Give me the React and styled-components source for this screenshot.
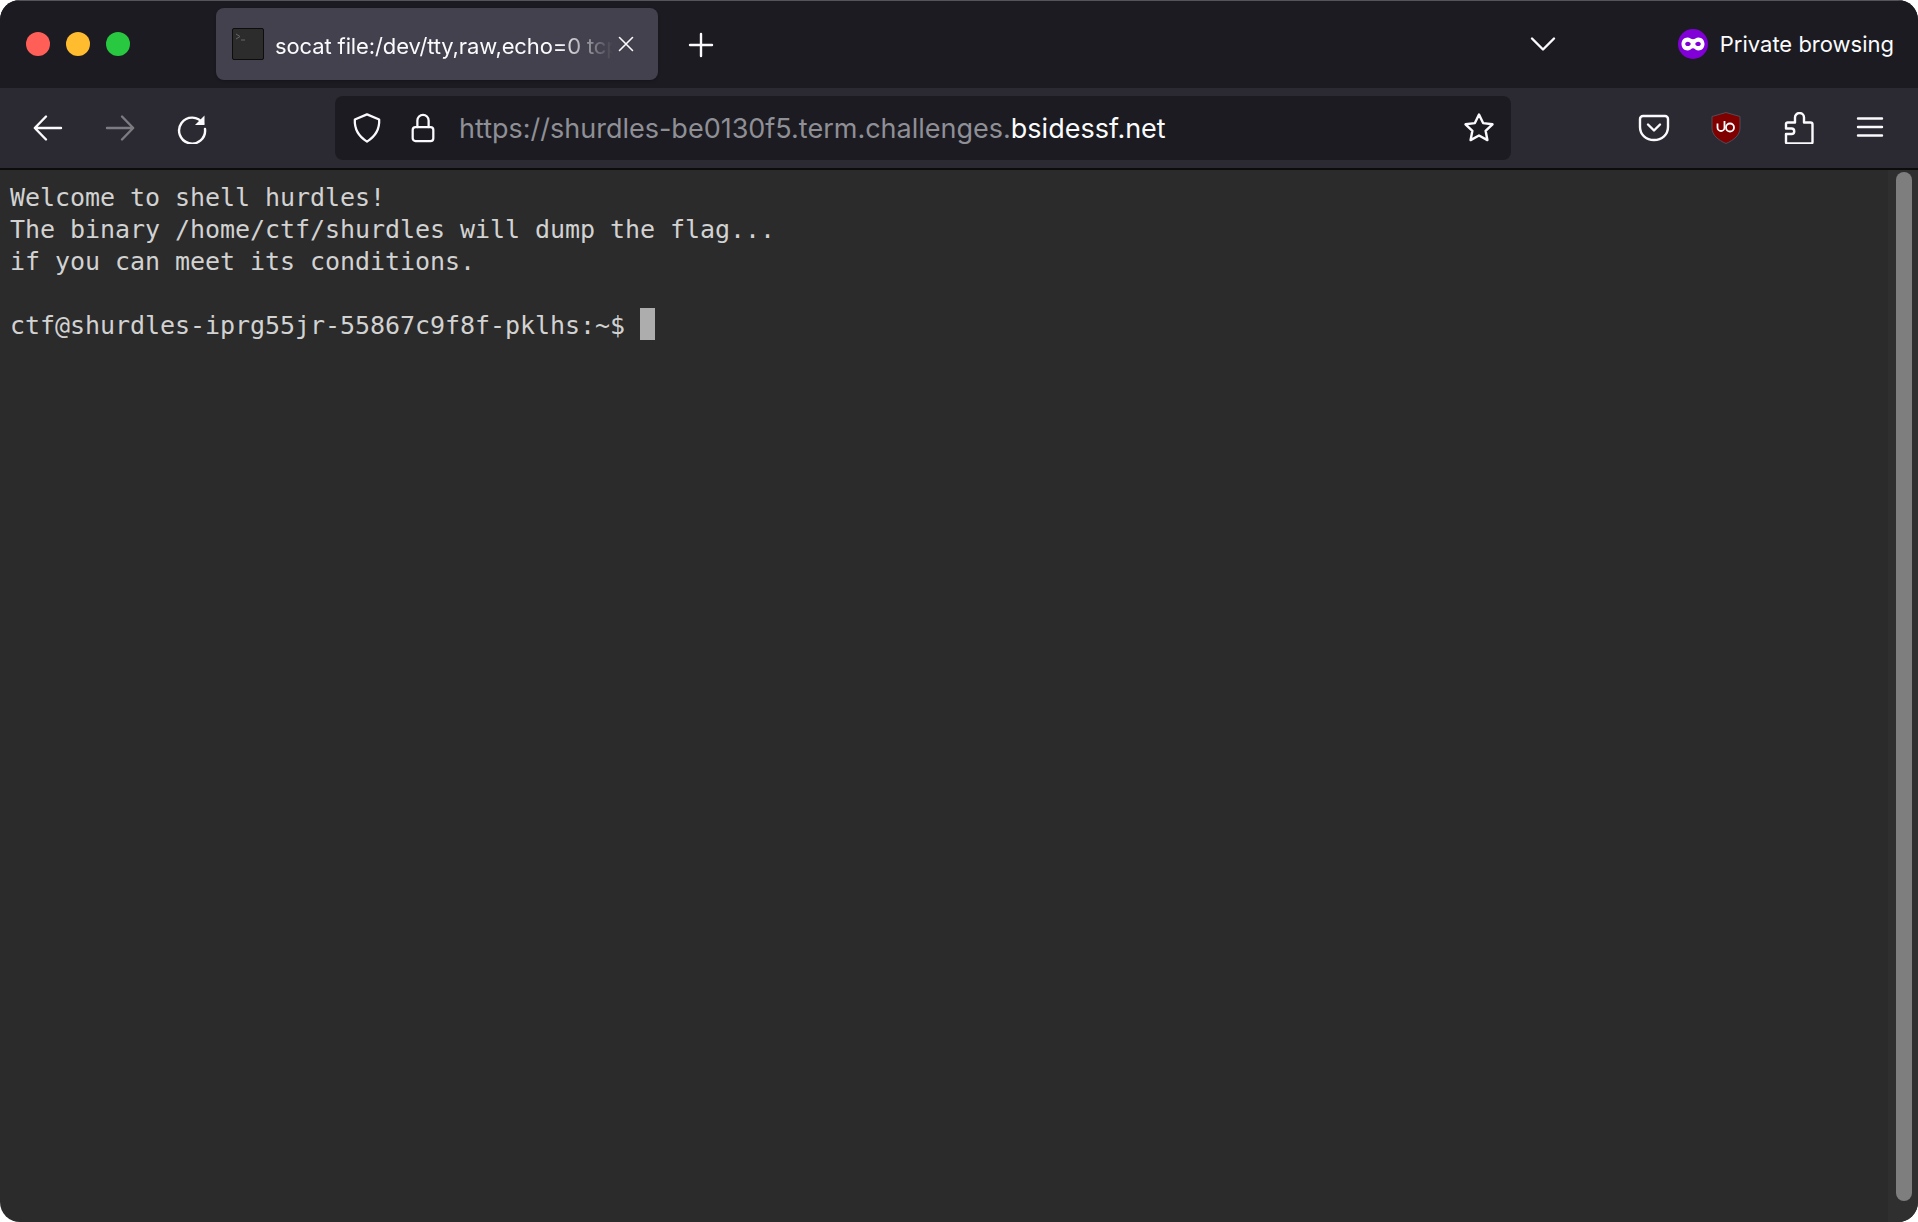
import React from 'react';
import styled, { createGlobalStyle } from 'styled-components';

const GlobalStyle = createGlobalStyle`
  html, body {
    margin: 0;
    padding: 0;
    background: #fff;
  }
`;

const Window = styled.div`
  width: 1918px;
  height: 1222px;
  display: flex;
  flex-direction: column;
  border-radius: 20px;
  overflow: hidden;
  background: #2b2b2b;
`;

const TabBar = styled.div`
  height: 88px;
  flex: none;
  box-sizing: border-box;
  display: flex;
  align-items: flex-start;
  background: #1c1b22;
  border-top: 1px solid #55545a;
  padding-top: 7px;
`;

const Lights = styled.div`
  display: flex;
  gap: 16px;
  margin: 24px 0 0 26px;
  width: 190px;
  flex: none;
`;

const Light = styled.span`
  width: 24px;
  height: 24px;
  border-radius: 50%;
  background: ${(p) => p.$color};
`;

const Tab = styled.div`
  width: 442px;
  height: 72px;
  flex: none;
  box-sizing: border-box;
  display: flex;
  align-items: center;
  padding: 0 20px 0 16px;
  border-radius: 8px;
  background: #42414d;
  box-shadow: 0 1px 3px rgba(0, 0, 0, 0.3);
`;

const TabFavicon = styled.svg`
  width: 32px;
  height: 32px;
  flex: none;
  margin-right: 11px;
`;

const TabTitle = styled.div`
  width: 338px;
  flex: none;
  overflow: hidden;
  white-space: nowrap;
  padding-top: 4px;
  font: 400 22px/30px Inter, "Noto Sans", sans-serif;
  letter-spacing: -0.12px;
  color: #fbfbfe;
  -webkit-mask-image: linear-gradient(to right, #000 84%, transparent 100%);
  mask-image: linear-gradient(to right, #000 84%, transparent 100%);
`;

const IconButton = styled.svg`
  flex: none;
  width: ${(p) => p.$size || 32}px;
  height: ${(p) => p.$size || 32}px;
  fill: none;
  stroke: ${(p) => p.$stroke || '#fbfbfe'};
  stroke-width: ${(p) => p.$weight || 2.4};
  stroke-linecap: round;
  stroke-linejoin: round;
`;

const CloseIcon = styled(IconButton)`
  margin-left: 3px;
`;

const LockIcon = styled(IconButton)`
  margin-left: 26px;
`;

const NewTab = styled.div`
  margin: 24px 0 0 30px;
  display: flex;
`;

const TabBarRight = styled.div`
  margin-left: auto;
  display: flex;
  align-items: center;
  height: 72px;
  padding-right: 24px;
`;

const ListTabs = styled.div`
  display: flex;
  margin-right: 122px;
`;

const PrivateLabel = styled.div`
  margin-left: 12px;
  font: 400 22px/30px Inter, "Noto Sans", sans-serif;
  color: #fbfbfe;
`;

const NavBar = styled.div`
  height: 82px;
  flex: none;
  box-sizing: border-box;
  display: flex;
  align-items: center;
  background: #2b2a33;
  border-bottom: 2px solid #0c0c0d;
  padding-left: 32px;
`;

const NavGroup = styled.div`
  display: flex;
  align-items: center;
  gap: 40px;
  width: 303px;
  flex: none;
`;

const UrlBar = styled.div`
  width: 1176px;
  height: 64px;
  flex: none;
  box-sizing: border-box;
  display: flex;
  align-items: center;
  border-radius: 8px;
  background: #1c1b22;
  padding: 0 16px 0 17px;
`;

const UrlText = styled.div`
  margin-left: 21px;
  padding-top: 2px;
  font: 400 27px/34px Inter, "Noto Sans", sans-serif;
  white-space: nowrap;
  color: #8f8f96;

  b {
    font-weight: 400;
    color: #fbfbfe;
  }
`;

const StarWrap = styled.div`
  margin-left: auto;
  display: flex;
`;

const ToolGroup = styled.div`
  display: flex;
  align-items: center;
  gap: 41px;
  margin-left: 127px;
`;

const Content = styled.div`
  flex: 1;
  min-height: 0;
  display: flex;
`;

const Terminal = styled.pre`
  flex: 1;
  margin: 0;
  padding: 12px 0 0 10px;
  font: 400 25px/32px "DejaVu Sans Mono", monospace;
  letter-spacing: -0.05px;
  color: #d2d2d2;
`;

const Cursor = styled.span`
  display: inline-block;
  width: 15px;
  height: 32px;
  margin-top: -2px;
  vertical-align: top;
  background: #adadad;
`;

const ScrollTrack = styled.div`
  width: 30px;
  flex: none;
  box-sizing: border-box;
  padding: 2px 6px 21px 8px;
  background: #2f2f2f;
`;

const ScrollThumb = styled.div`
  height: 100%;
  border-radius: 8px;
  background: #7e7e7e;
`;

const Favicon = () => (
  <TabFavicon viewBox="0 0 32 32">
    <rect x="0.5" y="0.5" width="31" height="31" rx="1.5" fill="#2c2c2c" stroke="#0d0d0d" />
    <path d="M4 6l4 2.5-4 2.5" fill="none" stroke="#666" strokeWidth="1" />
    <path d="M9 12h4" stroke="#666" strokeWidth="1.2" />
  </TabFavicon>
);

const PrivateMask = () => (
  <svg width="30" height="30" viewBox="0 0 30 30">
    <circle cx="15" cy="15" r="15" fill="#8000d7" />
    <path
      fillRule="evenodd"
      fill="#fff"
      d="M9.5 8.5c2.4 0 3.9 1.8 5.5 1.8s3.1-1.8 5.5-1.8c3.4 0 6 2.8 6 6.5s-2.6 6.5-6 6.5c-2.4 0-3.9-2.3-5.5-2.3s-3.100 2.300-5.500 2.300c-3.400 0-6-2.800-6-6.500s2.600-6.500 6-6.500zM9.800 12.800c-1.500 0-2.600 1-2.600 2.100s1.100 2.100 2.600 2.100 2.900-1 2.900-2.100-1.400-2.100-2.900-2.100zM20.200 12.800c-1.500 0-2.900 1-2.900 2.100s1.400 2.100 2.900 2.100 2.600-1 2.600-2.100-1.100-2.100-2.600-2.100z"
    />
  </svg>
);

const UblockShield = () => (
  <svg width="30" height="32" viewBox="0 0 30 32">
    <path d="M15 0.500L29 4.500V16c0 7-6 12-14 15.500C7 28 1 23 1 16V4.500z" fill="#800000" stroke="#4d4d55" strokeWidth="1" />
    <path d="M6.500 11.500v4a3.500 3.500 0 0 0 7 0V9" fill="none" stroke="#fff" strokeWidth="1.800" />
    <circle cx="19" cy="15.500" r="4" fill="none" stroke="#fff" strokeWidth="1.800" />
  </svg>
);

export default function App() {
  return (
    <>
      <GlobalStyle />
      <Window>
        <TabBar>
          <Lights>
            <Light $color="#ff5f57" />
            <Light $color="#febc2e" />
            <Light $color="#28c840" />
          </Lights>
          <Tab>
            <Favicon />
            <TabTitle>socat file:/dev/tty,raw,echo=0 tcp:shurdles</TabTitle>
            <CloseIcon $size={20} $weight={1.6} viewBox="0 0 20 20">
              <path d="M3.500 3.500l13 13M16.500 3.500l-13 13" />
            </CloseIcon>
          </Tab>
          <NewTab>
            <IconButton $size={26} viewBox="0 0 26 26">
              <path d="M13 2v22M2 13h22" />
            </IconButton>
          </NewTab>
          <TabBarRight>
            <ListTabs>
              <IconButton $size={26} viewBox="0 0 26 26">
                <path d="M2 7.500l11 11 11-11" />
              </IconButton>
            </ListTabs>
            <PrivateMask />
            <PrivateLabel>Private browsing</PrivateLabel>
          </TabBarRight>
        </TabBar>

        <NavBar>
          <NavGroup>
            <IconButton viewBox="0 0 32 32">
              <path d="M29 16H3M14 4.500L2.800 16 14 27.500" />
            </IconButton>
            <IconButton viewBox="0 0 32 32" $stroke="#7c7b82">
              <path d="M3 16h26M18 4.500L29.200 16 18 27.500" />
            </IconButton>
            <IconButton viewBox="0 0 32 32">
              <path d="M27 11.500A13 13 0 1 0 29 17" />
              <path d="M28.500 3.500v9.500h-9.500z" fill="#fbfbfe" stroke="none" />
            </IconButton>
          </NavGroup>
          <UrlBar>
            <IconButton $size={30} viewBox="0 0 30 32">
              <path d="M15 1.500l13 5.500c.500 10-4 18-13 23.500C6 25 1.500 17 2 7z" />
            </IconButton>
            <LockIcon $size={30} viewBox="0 0 30 32">
              <rect x="4" y="15" width="22" height="15" rx="3" />
              <path d="M9 15V8a6 6 0 0 1 12 0v7" />
            </LockIcon>
            <UrlText>
              https://shurdles-be0130f5.term.challenges.<b>bsidessf.net</b>
            </UrlText>
            <StarWrap>
              <IconButton viewBox="0 0 32 32">
                <path d="M16 2.500l4.100 8.600 9.400 1.200-6.900 6.500 1.800 9.300-8.400-4.600-8.400 4.600 1.800-9.300-6.900-6.500 9.400-1.200z" />
              </IconButton>
            </StarWrap>
          </UrlBar>
          <ToolGroup>
            <IconButton viewBox="0 0 32 32">
              <path d="M5 4h22a3 3 0 0 1 3 3v8c0 7.500-6 13-14 13S2 22.500 2 15V7a3 3 0 0 1 3-3z" />
              <path d="M10 12.500l6 6 6-6" />
            </IconButton>
            <UblockShield />
            <IconButton viewBox="0 0 32 32">
              <path d="M4 12a1.500 1.500 0 0 1 1.500-1.500H13V5.500a4.500 4.500 0 0 1 9 0v5h6.500a2 2 0 0 1 2 2V30a1.500 1.500 0 0 1-1.500 1.500H5.500A1.500 1.500 0 0 1 4 30v-8h5.500a2.750 2.750 0 0 0 0-5.500H4z" />
            </IconButton>
            <IconButton viewBox="0 0 32 32">
              <path d="M3 6.500h24M3 15h24M3 23.500h24" />
            </IconButton>
          </ToolGroup>
        </NavBar>

        <Content>
          <Terminal>
            {'Welcome to shell hurdles!\nThe binary /home/ctf/shurdles will dump the flag...\nif you can meet its conditions.\n\nctf@shurdles-iprg55jr-55867c9f8f-pklhs:~$ '}
            <Cursor />
          </Terminal>
          <ScrollTrack>
            <ScrollThumb />
          </ScrollTrack>
        </Content>
      </Window>
    </>
  );
}
